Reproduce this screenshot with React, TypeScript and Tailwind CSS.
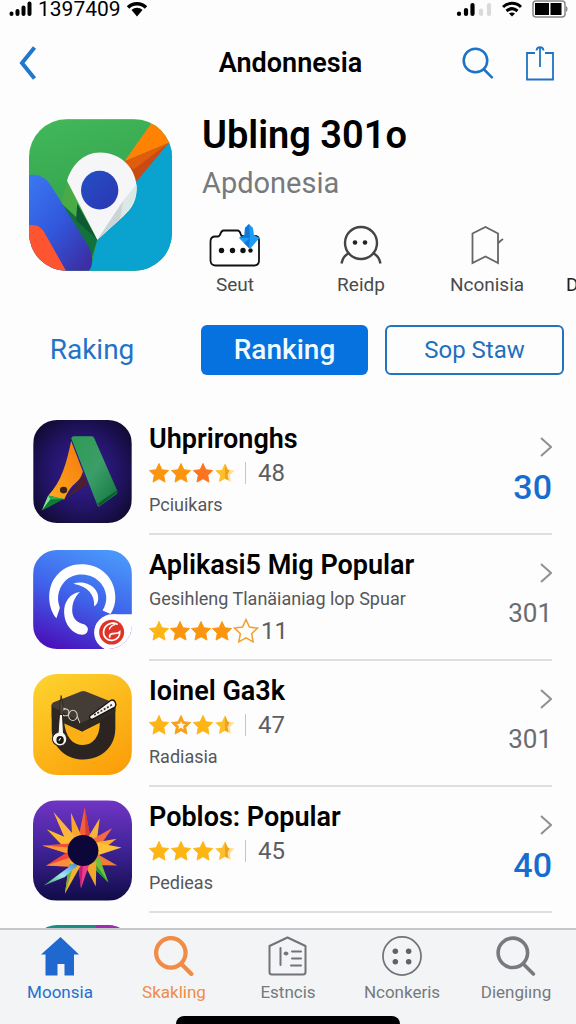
import type { ReactNode } from 'react';

type StarKind = 'full' | 'warm' | 'light' | 'half' | 'inset' | 'empty';

type AppEntry = {
  id: number,
  name: string,
  category: string,
  stars: StarKind[],
  votes: number,
  rank: number,
  highlight: boolean,
  categoryFirst?: boolean,
  icon: ReactNode,
}

const STAR_PATH = 'M12 1.5l3.2 6.9 7.4.9-5.4 5.2 1.4 7.5-6.6-3.7L5.4 22l1.4-7.5L1.4 9.3l7.4-.9z';

const Star = ({ kind }: { kind: StarKind }) => {
  if (kind === 'empty') {
    return (
      <svg viewBox="0 0 24 24" className="h-[26px] w-[26px]" fill="#fffdf8" stroke="#f0a030" strokeWidth="1.4">
        <path d={STAR_PATH} />
      </svg>
    )
  }
  if (kind === 'half') {
    return (
      <svg viewBox="1 1 22 22" className="h-5 w-5">
        <path d={STAR_PATH} fill="#ffe09a" />
        <path d="M12 1.5v16.8L5.4 22l1.4-7.5L1.4 9.3l7.4-.9z" fill="#fdc02c" />
        <path d="M12 1.5l3.2 6.9 2 .3-2.4 5.6 1.2 5.9-4-1.9z" fill="#f5a01c" />
      </svg>
    )
  }
  const fill = kind === 'warm' ? '#fb7420' : kind === 'light' ? '#fdb515' : '#fb9510';
  return (
    <svg viewBox="1 1 22 22" className="h-5 w-5">
      <path d={STAR_PATH} fill={kind === 'inset' ? '#f7a01c' : fill} stroke={kind === 'inset' ? '#f7a01c' : fill} strokeWidth="1" strokeLinejoin="round" />
      {kind === 'inset' && <path d="M12 7.5l1.4 3.1 3.3.4-2.4 2.3.6 3.3-2.9-1.6-2.9 1.6.6-3.3L7.3 11l3.3-.4z" fill="#fff4dc" />}
    </svg>
  )
}

const MapLogo = () => (
  <svg viewBox="27 27 429 455" className="h-[152px] w-[143px] shrink-0 overflow-hidden rounded-[38px]">
    <defs>
      <linearGradient id="mapGreen" x1="0" y1="0" x2="0.3" y2="1">
        <stop offset="0" stopColor="#43b85a" />
        <stop offset="1" stopColor="#2c9a49" />
      </linearGradient>
      <linearGradient id="mapBlue" x1="0" y1="0" x2="0.8" y2="1">
        <stop offset="0" stopColor="#3b78f2" />
        <stop offset="0.55" stopColor="#3157db" />
        <stop offset="1" stopColor="#3c2fa6" />
      </linearGradient>
      <linearGradient id="mapDot" x1="0" y1="0" x2="1" y2="1">
        <stop offset="0" stopColor="#2350c4" />
        <stop offset="1" stopColor="#2d35b4" />
      </linearGradient>
    </defs>
    <rect x="27" y="27" width="429" height="455" fill="url(#mapGreen)" />
    <path d="M456 82L345 215 232 388 210 482H456z" fill="#0aa3cf" />
    <path d="M392 42L313 154 445 99 470 60 440 20z" fill="#ff8205" />
    <path d="M313 154L445 99 350 213z" fill="#c94a12" />
    <path d="M313 154L445 99 340 178z" fill="#e05d0d" />
    <path d="M142 212L124 280 165 320 232 388z" fill="#49ab45" />
    <path d="M124 280L170 322 232 388 216 440 150 330z" fill="#13713c" />
    <path d="M172 280L232 388 168 330z" fill="#0e5a35" />
    <path d="M27 195C60 188 82 206 98 234L205 408C218 430 222 462 207 482H27z" fill="url(#mapBlue)" />
    <path d="M27 345C52 342 66 352 76 372L138 482H27z" fill="#ff5430" />
    <path d="M141 212C155 165 190 127 240 127c65 0 110 50 110 108 0 45-22 68-50 92l-68 62z" fill="#f6f6f8" />
    <path d="M350 222c2 48-20 76-50 105l-68 62 78-118z" fill="#dce8e6" />
    <path d="M310 271l-10 56-68 62z" fill="#cbd5d6" />
    <ellipse cx="239" cy="240" rx="56" ry="58" fill="url(#mapDot)" />
  </svg>
)

const RibbonLogo = () => (
  <svg viewBox="41 25 296 310" className="h-[103px] w-[99px] overflow-hidden rounded-3xl">
    <defs>
      <radialGradient id="ribbonBg" cx="0.5" cy="0.5" r="0.65">
        <stop offset="0" stopColor="#35209a" />
        <stop offset="0.55" stopColor="#241468" />
        <stop offset="1" stopColor="#0d0a2c" />
      </radialGradient>
      <linearGradient id="ribbonGreen" x1="0" y1="0" x2="1" y2="1">
        <stop offset="0" stopColor="#2c9c54" />
        <stop offset="0.5" stopColor="#3c9d68" />
        <stop offset="1" stopColor="#11733c" />
      </linearGradient>
      <linearGradient id="ribbonOrange" x1="1" y1="0" x2="0" y2="1">
        <stop offset="0" stopColor="#f5780f" />
        <stop offset="1" stopColor="#ffa91c" />
      </linearGradient>
    </defs>
    <rect x="41" y="25" width="296" height="310" fill="url(#ribbonBg)" />
    <path d="M186 176l20 42-72 46c26-18 44-50 52-88z" fill="#4c1f33" />
    <path d="M155 88l35 92c-4 20-18 32-30 42-10 10-18 24-26 42L86 252c40-42 55-98 69-164z" fill="url(#ribbonOrange)" />
    <path d="M155 80q2-6 8-6h54q5 0 7 5l70 160q2 6-2 9l-52 37q-4 2-6-3z" fill="url(#ribbonGreen)" />
    <path d="M294 242l-54 43-6-8 58-40z" fill="#0c5b2e" />
    <ellipse cx="132" cy="236" rx="11" ry="10" fill="#3b2213" />
    <path d="M86 252l46 10-65 35z" fill="#27b04e" />
    <path d="M86 252l6 12-25 33z" fill="#8be094" />
    <path d="M92 264l40-2-65 35z" fill="#0e7a34" />
  </svg>
)

const SwirlLogo = () => (
  <svg viewBox="41 27 293 294" className="h-[99px] w-[99px] overflow-hidden rounded-3xl">
    <defs>
      <linearGradient id="swirlBg" x1="0.7" y1="0" x2="0.3" y2="1">
        <stop offset="0" stopColor="#4a96fa" />
        <stop offset="0.5" stopColor="#3f62ea" />
        <stop offset="1" stopColor="#4a14bd" />
      </linearGradient>
    </defs>
    <rect x="41" y="27" width="293" height="294" fill="url(#swirlBg)" />
    <path d="M110 230C86 204 80 148 104 112 126 78 160 66 198 70c52 6 87 47 87 97 0 20-5 34-14 50l-24-10c8-14 12-26 11-42-3-35-31-63-70-65-41-2-70 28-73 68-1 16 6 28 5 32z" fill="#fff" />
    <path d="M180 152c-30 4-49 30-47 62 2 36 24 62 54 65 12 0 18-10 16-20-3-11-15-12-24-16-15-7-23-22-22-41 1-22 10-38 23-50z" fill="#fff" />
    <path d="M160 127c36-12 78 10 74 48-1 10-6 16-12 20 3-34-18-61-62-68z" fill="#fff" />
    <circle cx="276" cy="272" r="54" fill="#fff" />
    <path d="M276 218h60v60z" fill="#fff" />
    <circle cx="274" cy="271" r="37" fill="#dd3427" />
    <path d="M292 248c-18-10-40 2-42 22-1 16 12 28 28 25 14-2 21-14 20-25-8 8-14 2-24 6-6 2-8 7-4 11" fill="none" stroke="#fff" strokeWidth="5" />
    <path d="M267 263c3-9 10-13 18-15" fill="none" stroke="#fff" strokeWidth="4" />
  </svg>
)

const GraduateLogo = () => (
  <svg viewBox="41 20 293 300" className="h-[101px] w-[99px] overflow-hidden rounded-3xl">
    <defs>
      <linearGradient id="gradBg" x1="0.2" y1="0" x2="0.8" y2="1">
        <stop offset="0" stopColor="#fdd02c" />
        <stop offset="1" stopColor="#fb9f0a" />
      </linearGradient>
    </defs>
    <rect x="41" y="20" width="293" height="300" fill="url(#gradBg)" />
    <path d="M96 112v72c0 50 40 90 94 90 56 0 95-40 95-92v-72z" fill="#2b2420" />
    <path d="M133 163l54 28 52-26c0 40-20 66-50 66-32 0-52-26-56-68z" fill="#fcb016" />
    <path d="M96 112v38l90 41 99-58v-26z" fill="#2f2823" />
    <path d="M102 104q-8 4-6 12l90 49 99-50q0-8-8-11l-80-32q-7-3-14 0z" fill="#453d35" />
    <path d="M210 144l62-46c12-4 18 12 12 20l-66 36c-8 2-12-4-8-10z" fill="#f7f4ee" stroke="#171310" strokeWidth="4" />
    <path d="M222 142l54-31" stroke="#39322c" strokeWidth="5" strokeDasharray="6 5" />
    <g fill="none" stroke="#d8d3ca" strokeWidth="3">
      <circle cx="137" cy="134" r="10" />
      <ellipse cx="159" cy="143" rx="13" ry="15" />
      <path d="M123 118l14 6M172 146l8 20" />
    </g>
    <path d="M124 84l6 30-2 28h-7l-1-28z" fill="#514840" stroke="#241c16" strokeWidth="2" />
    <path d="M119 140h9l3 54c12 8 14 26 2 36-12 8-30 2-34-12-3-12 4-22 16-25z" fill="#f8f6f1" stroke="#2a231c" strokeWidth="3" />
    <ellipse cx="121" cy="216" rx="11" ry="12" fill="#191512" />
    <path d="M117 218l6-8" stroke="#fff" strokeWidth="3" />
  </svg>
)

const SunLogo = () => (
  <svg viewBox="41 20 295 298" className="h-[101px] w-[99px] overflow-hidden rounded-3xl">
    <defs>
      <linearGradient id="sunBg" x1="0" y1="0" x2="0" y2="1">
        <stop offset="0" stopColor="#7034c4" />
        <stop offset="0.45" stopColor="#43259c" />
        <stop offset="1" stopColor="#100b48" />
      </linearGradient>
      <linearGradient id="sunTail" x1="1" y1="0" x2="0" y2="1">
        <stop offset="0" stopColor="#3b84f0" />
        <stop offset="0.5" stopColor="#a8e8ec" />
        <stop offset="1" stopColor="#2ca04c" />
      </linearGradient>
    </defs>
    <rect x="41" y="20" width="295" height="298" fill="url(#sunBg)" />
    <path d="M176 132L195 40l18 94z" fill="#f0603c" />
    <path d="M195 40l3 94h15z" fill="#d63b34" />
    <path d="M158 138L154 56l34 76z" fill="#f9a72c" />
    <path d="M204 132l36-60-10 76z" fill="#f8b33a" />
    <path d="M144 152L102 54l74 84z" fill="#fbb63f" />
    <path d="M210 140l67-38-45 66z" fill="#f46a45" />
    <path d="M142 168L82 106l80 34z" fill="#fdbb32" />
    <path d="M222 146l68-12-58 46z" fill="#fcae2b" />
    <path d="M150 148L68 154l82 26z" fill="#ef5237" />
    <path d="M68 154l82 6v20z" fill="#f99b36" />
    <path d="M230 146l75 14-73 24z" fill="#fdc03c" />
    <path d="M150 170L80 214l90 4z" fill="#f2453b" />
    <path d="M80 214l72-24 18 28z" fill="#fa8e3c" />
    <path d="M226 176l66 38-84-2z" fill="#f17c35" />
    <path d="M208 208l58 56-28-76z" fill="#6bc43b" />
    <path d="M208 208l58 56-42-60z" fill="#2b9443" />
    <path d="M196 212l32 64 2-74z" fill="#f2a62a" />
    <path d="M176 212l8 70 24-70z" fill="#ec3d8a" />
    <path d="M176 212l8 70 6-68z" fill="#bd1d72" />
    <path d="M150 200l-14 98 48-86z" fill="#f3b12c" />
    <path d="M136 298l14-92 12 8z" fill="#69b03a" />
    <path d="M164 206L72 274l64-26 38-34z" fill="url(#sunTail)" />
    <circle cx="190" cy="169" r="46" fill="#0c0738" />
  </svg>
)

const RainbowLogo = () => (
  <svg viewBox="0 0 99 101" className="h-[101px] w-[99px] overflow-hidden rounded-3xl">
    <rect width="99" height="101" fill="#168f82" />
    <path d="M63 0h36v101H63z" fill="#a02bb0" />
  </svg>
)

const SearchIcon = ({ className, width }: { className: string, width: number }) => (
  <svg viewBox="0 0 38 38" className={className} fill="none" stroke="currentColor" strokeWidth={width} strokeLinecap="round">
    <circle cx="16" cy="16" r="14" />
    <path d="M26.5 27L35.5 36" />
  </svg>
)

const CameraIcon = () => (
  <svg viewBox="0 0 52 44" className="h-11 w-[52px]">
    <path d="M6.500 13.500h2.500c3 0 2-6 5.500-6h14c3 0 2.500 3 4 5.500h13c3 0 4.500 2 4.500 4.500v20c0 3-2 5-5 5H6.500c-3 0-5-2-5-5v-19c0-3 2-5 5-5z" fill="#fff" stroke="#111" strokeWidth="1.800" />
    <g fill="#111">
      <circle cx="12.500" cy="27.500" r="2.700" />
      <circle cx="23.500" cy="27.500" r="2.700" />
      <circle cx="34" cy="27.500" r="2.700" />
      <circle cx="41.500" cy="27.500" r="2.200" />
    </g>
    <path d="M40 1l4 4 1 7 5.500 3L41 26 30 15l5.500-3 .5-7z" fill="#1d9bf5" />
    <path d="M40 1l1 14-11 0 5.500-3 .5-7zM41 15l-1 10-5-5z" fill="#1179d3" />
  </svg>
)

const FaceIcon = () => (
  <svg viewBox="0 0 42 40" className="h-10 w-[42px]" fill="none" stroke="#444" strokeWidth="2.400">
    <circle cx="21" cy="18" r="16" />
    <path d="M1.500 38.500c1-5 3.500-8.500 7.500-10.500M40.500 38.500c-1-5-3.500-8.500-7.500-10.500" />
    <circle cx="15" cy="17.500" r="2.300" fill="#222" stroke="none" />
    <circle cx="25" cy="17.500" r="2.300" fill="#222" stroke="none" />
  </svg>
)

const BookmarkIcon = () => (
  <svg viewBox="0 0 34 40" className="h-10 w-[34px]" fill="none" stroke="#666" strokeWidth="1.800">
    <path d="M2.500 8.500L15.500 2 28 8.500v29.500L15.500 31.500 2.500 38z" />
    <path d="M28 18l2-1M28.500 17.500L33 14" />
  </svg>
)

const HomeIcon = () => (
  <svg viewBox="0 0 40 40" className="h-10 w-10" fill="#1f68cf">
    <path d="M20.500 1L39 18.500h-5V39.500H24.500V28h-7v11.500H5.500v-21H1z" />
  </svg>
)

const BuildingIcon = () => (
  <svg viewBox="0 0 40 40" className="h-10 w-10" fill="none" stroke="#707377" strokeWidth="2" strokeLinecap="round" strokeLinejoin="round">
    <path d="M1.500 10L19.500 1.500 37.500 10v26c0 1.500-1 2.500-2.500 2.500H4c-1.500 0-2.500-1-2.500-2.500z" />
    <path d="M12.500 12v17M16.500 17.500h3M24 15.500h9M24 22.500h9M23 29.500h10" />
    <circle cx="18" cy="17.500" r="1" />
  </svg>
)

const DotsIcon = () => (
  <svg viewBox="0 0 42 42" className="h-10 w-10" fill="none" stroke="#707377" strokeWidth="1.800">
    <circle cx="21" cy="21" r="20" />
    <g fill="#5f6266" stroke="none">
      <circle cx="14" cy="16" r="2.900" />
      <circle cx="28" cy="16" r="2.900" />
      <circle cx="14" cy="27" r="2.900" />
      <circle cx="28" cy="27" r="2.900" />
    </g>
  </svg>
)

const apps: AppEntry[] = [
  { id: 1, name: 'Uhprironghs', category: 'Pciuikars', stars: ['full', 'full', 'warm', 'half'], votes: 48, rank: 30, highlight: true, icon: <RibbonLogo /> },
  { id: 2, name: 'Aplikasi5 Mig Popular', category: 'Gesihleng Tlanäianiag lop Spuar', stars: ['light', 'full', 'full', 'full', 'empty'], votes: 11, rank: 301, highlight: false, categoryFirst: true, icon: <SwirlLogo /> },
  { id: 3, name: 'Ioinel Ga3k', category: 'Radiasia', stars: ['light', 'inset', 'light', 'half'], votes: 47, rank: 301, highlight: false, icon: <GraduateLogo /> },
  { id: 4, name: 'Poblos: Popular', category: 'Pedieas', stars: ['light', 'light', 'light', 'half'], votes: 45, rank: 40, highlight: true, icon: <SunLogo /> },
];

const actions = [
  { label: 'Seut', icon: <CameraIcon /> },
  { label: 'Reidp', icon: <FaceIcon /> },
  { label: 'Nconisia', icon: <BookmarkIcon /> },
];

const tabs = [
  { label: 'Moonsia', color: 'text-[#1f6fd0]', icon: <HomeIcon /> },
  { label: 'Skakling', color: 'text-[#f08c46]', icon: <SearchIcon className="h-10 w-10" width={4} /> },
  { label: 'Estncis', color: 'text-[#76797d]', icon: <BuildingIcon /> },
  { label: 'Nconkeris', color: 'text-[#76797d]', icon: <DotsIcon /> },
  { label: 'Diengiıng', color: 'text-[#76797d]', icon: <SearchIcon className="h-10 w-10" width={3.4} /> },
];

const StatusBar = () => (
  <div className="flex h-[18px] shrink-0 items-center justify-between px-2">
    <div className="flex items-center gap-1.5">
      <svg viewBox="0 0 24 16" className="h-4 w-6" stroke="#000" strokeWidth="4" strokeLinecap="round">
        <path d="M3.500 12.500v.5M9.500 10v3M15.500 6.500V13M21.500 2.500V13" />
      </svg>
      <span className="text-[21px] leading-[18px] text-black">1397409</span>
      <svg viewBox="0 0 20 16" className="h-4 w-5" fill="none" stroke="#000" strokeWidth="3.600">
        <path d="M1 6.500C6 1.500 14 1.500 19 6.500" />
        <path d="M4.500 9C8 6 12 6 15.500 9L10 15.500z" fill="#000" stroke="none" />
      </svg>
    </div>
    <div className="flex items-center gap-2.5">
      <svg viewBox="0 0 36 16" className="h-4 w-9" stroke="#000" strokeWidth="4.200" strokeLinecap="round">
        <path d="M3 12.500v.5M10 9V13M16.500 4v9" />
        <path d="M25 9.500V13M33 4v9" stroke="#d9dadc" />
      </svg>
      <svg viewBox="0 0 20 16" className="h-4 w-5" fill="none" stroke="#000" strokeWidth="3">
        <path d="M1 6C6 1 14 1 19 6M4.500 10c3.500-3 7.500-3 11 0" />
        <path d="M7 12.500c2-1.500 4-1.500 6 0L10 15.500z" fill="#000" stroke="none" />
      </svg>
      <svg viewBox="0 0 36 18" className="h-[18px] w-9">
        <rect x="1" y="1" width="32" height="16" rx="3" fill="#fff" stroke="#85878a" strokeWidth="1.500" />
        <path d="M3 3h14v12H3zM18.500 3h11v12h-11z" fill="#000" />
        <path d="M34 6c2 1 2 5 0 6z" fill="#85878a" />
      </svg>
    </div>
  </div>
)

const AppRow = ({ app }: { app: AppEntry }) => {
  const category = <p className="truncate text-lg leading-8 text-[#55575a]">{app.category}</p>;
  const rating = (
    <div className="flex h-8 items-center">
      <span className={app.categoryFirst ? 'flex items-center gap-px' : 'flex items-center gap-0.5'} role="img" aria-label="Rating">
        {app.stars.map((kind, index) => <Star key={index} kind={kind} />)}
      </span>
      {!app.categoryFirst && <span className="ml-2.5 h-[22px] w-px bg-[#c4c6c9]" />}
      <span className={app.categoryFirst ? 'ml-0.5 text-2xl text-[#5c5e61]' : 'ml-3 text-2xl text-[#5c5e61]'}>{app.votes}</span>
    </div>
  );

  return (
    <li className="flex h-[126px] items-end gap-[17px] pr-6 pl-[33px]">
      <div className="shrink-0 pb-3">{app.icon}</div>
      <a href="#app" className="flex h-full min-w-0 flex-1 items-end border-b-2 border-[#dedfe1]">
        <div className="min-w-0 flex-1 pb-3">
          <h2 className="truncate text-[27px] leading-9 font-semibold text-black">{app.name}</h2>
          {app.categoryFirst ? category : rating}
          {app.categoryFirst ? rating : category}
        </div>
        <div className="flex flex-col items-end pb-6">
          <svg viewBox="0 0 12 20" className="h-5 w-3" fill="none" stroke="#8e9093" strokeWidth="2">
            <path d="M1 1l10 9-10 9" />
          </svg>
          <span className={app.highlight ? 'mt-2 text-[34px] leading-11 font-medium text-[#166dcf]' : 'mt-2 text-[26px] leading-11 text-[#6a6c6f]'}>{app.rank}</span>
        </div>
      </a>
    </li>
  )
}

const App = () => {
  return (
    <div className="flex h-screen flex-col overflow-hidden bg-[#fdfdfe] font-[Roboto,'Liberation_Sans',sans-serif]">
      <StatusBar />

      <header className="grid h-[90px] shrink-0 grid-cols-[1fr_auto_1fr] items-center pr-[22px] pl-[19px]">
        <button aria-label="Back" className="justify-self-start">
          <svg viewBox="0 0 18 34" className="h-[34px] w-[18px]" fill="none" stroke="#1f78cc" strokeWidth="4">
            <path d="M15.500 1.500L3 17l12.500 15.500" />
          </svg>
        </button>
        <h1 className="pl-2 text-[27px] leading-8 font-semibold text-black">Andonnesia</h1>
        <div className="flex items-center gap-8 justify-self-end text-[#1f73c4]">
          <button aria-label="Search"><SearchIcon className="h-8 w-8" width={3} /></button>
          <button aria-label="Share">
            <svg viewBox="0 0 28 36" className="h-9 w-7" fill="none" stroke="currentColor" strokeWidth="1.800">
              <path d="M9 8H1v26.500h26V8h-8M14 22V3M10.500 5.500C11 1 17 1 17.500 5.500" />
            </svg>
          </button>
        </div>
      </header>

      <main className="min-h-0 flex-1 overflow-hidden">
        <section className="flex pt-[11px] pl-[29px]">
          <MapLogo />
          <div className="min-w-0 flex-1">
            <h2 className="pl-[30px] text-[38px] leading-8 font-semibold text-black">Ubling 301o</h2>
            <p className="mt-4 pl-[30px] text-[29px] leading-8 text-[#77797c]">Apdonesia</p>
            <div className="mt-6 flex">
              {actions.map(action => (
                <button key={action.label} className="flex w-[126px] shrink-0 flex-col items-center text-[19px] leading-7 text-[#4a4a4c]">
                  <span className="flex h-11 items-center">{action.icon}</span>
                  <span className="mt-1">{action.label}</span>
                </button>
              ))}
              <button className="ml-4 self-end text-[19px] leading-7 text-[#222]">D</button>
            </div>
          </div>
        </section>

        <div className="mt-[26px] grid grid-cols-[172fr_167fr_179fr] gap-[17px] px-3 text-[28px]">
          <button className="h-[50px] pr-3 text-[#1f74c8]">Raking</button>
          <button className="h-[50px] rounded-md bg-[#0672e0] font-medium text-[#f0fbff]">Ranking</button>
          <button className="h-[50px] rounded-md border-2 border-[#2474bd] text-2xl text-[#1f70bd]">Sop Staw</button>
        </div>

        <ul className="mt-[34px]">
          {apps.map(app => <AppRow key={app.id} app={app} />)}
          <li className="flex h-[126px] items-start pt-3 pl-[33px]"><RainbowLogo /></li>
        </ul>
      </main>

      <nav className="shrink-0 border-t-2 border-[#c6c8cb] bg-[#f3f4f6]">
        <div className="grid grid-cols-5 px-[3px] pt-1.5">
          {tabs.map(tab => (
            <a key={tab.label} href="#tab" className={`flex flex-col items-center text-[17px] leading-6 ${tab.color}`}>
              {tab.icon}
              <span className="mt-1">{tab.label}</span>
            </a>
          ))}
        </div>
        <div className="mx-auto mt-3 h-2 w-[39%] rounded-t-lg bg-black" />
      </nav>
    </div>
  )
}

export default App
